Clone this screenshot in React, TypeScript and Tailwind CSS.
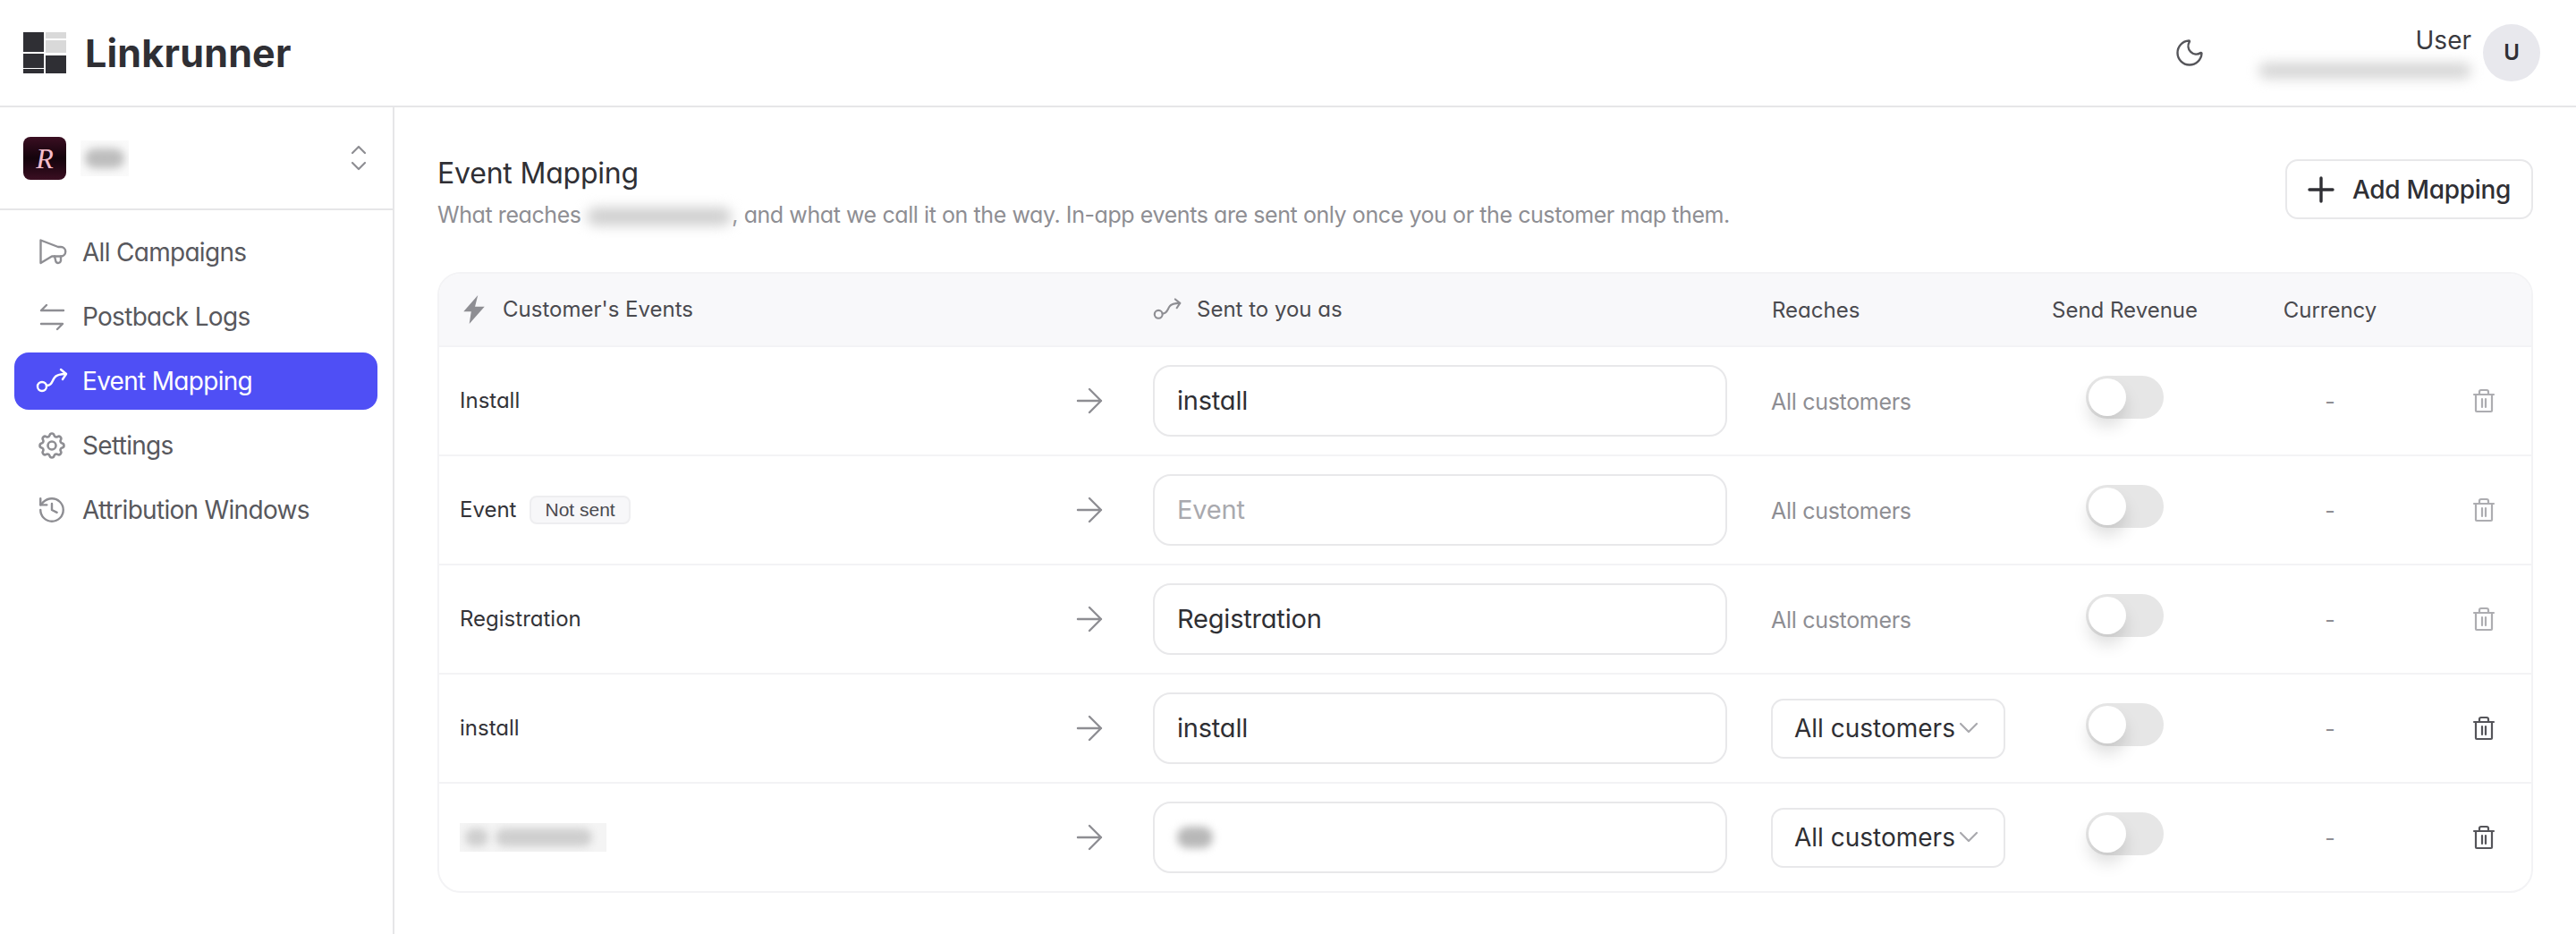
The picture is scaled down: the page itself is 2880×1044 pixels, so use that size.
import React from 'react';
import { History, Moon } from 'lucide-react';
import { TbSettings } from 'react-icons/tb';

const font = 'font-["Inter","Liberation_Sans",sans-serif] [font-feature-settings:"cv11"]';
const rowGrid = 'grid grid-cols-[798px_642px_363px_163px_296px_77px] items-center';

const LogoMark = () => (
  <svg width="48" height="46" viewBox="0 0 48 46" className="shrink-0">
    <rect x="0" y="0" width="23" height="22" fill="#2f2f34" />
    <rect x="0" y="24" width="23" height="16" fill="#2f2f34" />
    <rect x="0" y="41" width="23" height="5" fill="#2f2f34" />
    <rect x="25" y="0" width="23" height="7" fill="#d9d9d9" />
    <rect x="25" y="9" width="23" height="14" fill="#d9d9d9" />
    <rect x="25" y="26" width="23" height="20" fill="#2f2f34" />
  </svg>
);

const CampaignIcon = () => (
  <svg width="36" height="36" viewBox="0 0 36 36" fill="none" stroke="#8e8e93" strokeWidth="2.4" strokeLinejoin="round" strokeLinecap="round" className="shrink-0">
    <path d="M5.500 4.500L25 12h3a5 5 0 0 1 0 10.500H18L5.500 30Z" />
    <path d="M21 22.500l1.500 6a3 3 0 0 0 5.500-1v-5" />
  </svg>
);

const PostbackIcon = () => (
  <svg width="36" height="36" viewBox="0 0 36 36" fill="none" stroke="#8e8e93" strokeWidth="2.4" strokeLinecap="round" strokeLinejoin="round" className="shrink-0">
    <path d="M31 11H6l6-6" />
    <path d="M6 26h24l-6 6" />
  </svg>
);

const RouteIcon = ({ size, color }: { size: number; color: string }) => (
  <svg width={size} height={size} viewBox="0 0 36 36" fill="none" stroke={color} strokeWidth="2.4" strokeLinecap="round" strokeLinejoin="round" className="shrink-0">
    <circle cx="7" cy="24" r="5" />
    <path d="M12 23c6 0 6-5 9-9 2-3 5-4 13-4" />
    <path d="M28 5l6 5-4 6" />
  </svg>
);

const ArrowIcon = () => (
  <svg width="30" height="30" viewBox="0 0 30 30" fill="none" stroke="#8e8e93" strokeWidth="2.4" strokeLinecap="round" strokeLinejoin="round">
    <path d="M2 15h26M15 2l13 13-13 13" />
  </svg>
);

const TrashIcon = ({ color }: { color: string }) => (
  <svg width="26" height="28" viewBox="0 0 26 28" fill="none" stroke={color} strokeWidth="2.200" strokeLinecap="round" strokeLinejoin="round">
    <path d="M2 7h22" />
    <path d="M8 7V4a2 2 0 0 1 2-2h6a2 2 0 0 1 2 2v3" />
    <path d="M4 7v18a1 1 0 0 0 1 1h16a1 1 0 0 0 1-1V7" />
    <path d="M11 12v9M15 12v9" />
  </svg>
);

const Toggle = () => (
  <div className="mb-2 mx-auto w-[87px] h-[48px] rounded-full bg-[#e6e6e6] p-[3px]">
    <div className="w-[42px] h-[42px] rounded-full bg-white shadow-[0_12px_18px_rgba(0,0,0,0.13)]" />
  </div>
);

const Chevron = () => (
  <svg width="20" height="12" viewBox="0 0 20 12" fill="none" stroke="#8e8e93" strokeWidth="2.200" strokeLinecap="round" strokeLinejoin="round">
    <path d="M3 2l7 7 7-7" />
  </svg>
);

const navItems = [
  { label: 'All Campaigns', icon: <CampaignIcon /> },
  { label: 'Postback Logs', icon: <PostbackIcon /> },
  { label: 'Event Mapping', icon: <RouteIcon size={36} color="#ffffff" />, active: true },
  { label: 'Settings', icon: <TbSettings size={36} color="#8e8e93" strokeWidth={1.75} className="shrink-0" /> },
  { label: 'Attribution Windows', icon: <History size={34} color="#8e8e93" strokeWidth={1.7} className="shrink-0 mx-[1px]" /> },
];

const rows = [
  { name: 'Install', value: 'install', editable: false },
  { name: 'Event', value: '', editable: false, notSent: true },
  { name: 'Registration', value: 'Registration', editable: false },
  { name: 'install', value: 'install', editable: true },
  { name: '', value: '', editable: true, blurred: true },
];

export default function App() {
  return (
    <div className={`${font} h-screen bg-white flex flex-col overflow-hidden text-[#2f2f34]`}>
      <header className="h-[120px] shrink-0 border-b-2 border-[#e6e6e8] flex items-center justify-between pl-[26px] pr-[40px]">
        <div className="flex items-center gap-[21px]">
          <LogoMark />
          <span className="text-[43px] leading-none font-bold tracking-[0.2px]">Linkrunner</span>
        </div>
        <div className="flex items-center">
          <Moon size={36} color="#55555a" strokeWidth={1.6} className="mr-[52px]" />
          <div className="flex flex-col items-end mr-[13px] w-[245px] relative">
            <span className="text-[28px] leading-[36px] text-[#3a3a3f] -mt-[4px]">User</span>
            <div className="mt-[7px] w-[238px] h-[18px] rounded-full bg-[#d6d6d6] blur-[7px]" />
          </div>
          <div className="w-[64px] h-[64px] rounded-full bg-[#e8e8ed] flex items-center justify-center text-[24px] font-semibold">U</div>
        </div>
      </header>

      <div className="flex flex-1 min-h-0">
        <aside className="w-[441px] shrink-0 border-r-2 border-[#e6e6e8]">
          <div className="h-[115px] border-b-2 border-[#e6e6e8] flex items-center justify-between pl-[26px] pr-[28px]">
            <div className="flex items-center gap-[16px]">
              <div className="w-[48px] h-[48px] rounded-[8px] bg-gradient-to-b from-[#3b0f22] via-[#14040c] to-[#3b0f22] flex items-center justify-center text-[32px] italic text-[#f5bccb] font-['Liberation_Serif',serif]">R</div>
              <div className="w-[54px] h-[40px] bg-[#fafafa] overflow-hidden flex items-center justify-center">
                <div className="w-[44px] h-[22px] bg-[#bdbdbd] rounded-full blur-[5px]" />
              </div>
            </div>
            <div className="flex flex-col gap-[7px]">
              <div className="rotate-180"><Chevron /></div>
              <Chevron />
            </div>
          </div>
          <nav className="flex flex-col gap-[8px] pt-[15px] pl-[16px] pr-[17px]">
            {navItems.map(item => (
              <div
                key={item.label}
                className={`h-[64px] rounded-[16px] flex items-center gap-[16px] pl-[24px] text-[28px] tracking-[-0.7px] ${item.active ? 'bg-[#4f4ff5] text-white' : 'text-[#58585d]'}`}
              >
                {item.icon}
                <span>{item.label}</span>
              </div>
            ))}
          </nav>
        </aside>

        <main className="flex-1 min-w-0 pl-[48px] pr-[48px] pt-[54px]">
          <div className="flex items-start justify-between">
            <div>
              <h1 className="text-[32px] leading-[40px] font-normal tracking-[-0.2px] text-[#2f2f34]">Event Mapping</h1>
              <p className="mt-[8px] text-[25px] leading-[36px] tracking-[-0.42px] text-[#8e8e93]">
                What reaches <span className="inline-block align-middle w-[162px] h-[20px] bg-[#cfcfcf] rounded-full blur-[7px]" />, and what we call it on the way. In-app events are sent only once you or the customer map them.
              </p>
            </div>
            <button className="mt-[4px] h-[67px] w-[277px] rounded-[14px] border-2 border-[#e8e8ea] flex items-center justify-center gap-[20px] text-[28px] tracking-[-0.3px] font-medium text-[#2f2f34]">
              <svg width="30" height="30" viewBox="0 0 30 30" fill="none" stroke="#2f2f34" strokeWidth="3.400" strokeLinecap="round"><path d="M15 2v26M2 15h26" /></svg>
              Add Mapping
            </button>
          </div>

          <div className="mt-[46px] border-2 border-[#f3f3f5] rounded-[26px] overflow-hidden">
            <div className={`${rowGrid} h-[82px] bg-[#f8f8fa] border-b-2 border-[#f3f3f5] text-[24px] text-[#4a4a4f]`}>
              <div className="flex items-center gap-[20px] pl-[27px]">
                <svg width="24" height="32" viewBox="0 0 22 30" fill="#8e8e93" className="shrink-0"><path d="M15 0L0 17h8L6 30l16-18H12Z" /></svg>
                <span>Customer's Events</span>
              </div>
              <div className="flex items-center gap-[17px]">
                <RouteIcon size={32} color="#8e8e93" />
                <span>Sent to you as</span>
              </div>
              <div className="pl-[50px] mt-[2px]">Reaches</div>
              <div className="text-center whitespace-nowrap mt-[2px]">Send Revenue</div>
              <div className="text-center mt-[2px]">Currency</div>
              <div />
            </div>

            {rows.map((row, i) => (
              <div key={i} className={`${rowGrid} ${i < rows.length - 1 ? 'h-[122px] border-b-2 border-[#f3f3f5]' : 'h-[120px]'}`}>
                <div className="flex items-center justify-between pl-[23px] pr-[56px]">
                  {row.blurred ? (
                    <div className="w-[164px] h-[32px] bg-[#f4f4f4] overflow-hidden flex items-center gap-[8px] pl-[6px]">
                      <div className="w-[26px] h-[20px] bg-[#cfcfcf] rounded-full blur-[4px]" />
                      <div className="w-[108px] h-[20px] bg-[#cfcfcf] rounded-full blur-[4px]" />
                    </div>
                  ) : (
                    <div className="flex items-center gap-[15px] text-[24px] text-[#333338]">
                      <span>{row.name}</span>
                      {row.notSent && (
                        <span className="h-[32px] px-[15px] rounded-[8px] bg-[#f7f7f9] border-2 border-[#eeeef0] flex items-center text-[21px] text-[#4a4a4f] font-['Liberation_Sans',sans-serif]">Not sent</span>
                      )}
                    </div>
                  )}
                  <ArrowIcon />
                </div>
                <div className="h-[80px] rounded-[20px] border-2 border-[#e8e8ea] flex items-center px-[25px]">
                  {row.blurred ? (
                    <div className="w-[40px] h-[24px] rounded-full bg-[#b8b8b8] blur-[5px]" />
                  ) : (
                    <input
                      readOnly
                      defaultValue={row.value}
                      placeholder={row.name}
                      className="w-full bg-transparent outline-none text-[29px] tracking-[-0.2px] text-[#2f2f34] placeholder:text-[#a9a9ae]"
                    />
                  )}
                </div>
                <div className="pl-[49px]">
                  {row.editable ? (
                    <div className="w-[262px] h-[67px] rounded-[14px] border-2 border-[#e8e8ea] flex items-center pl-[24px] text-[28px] text-[#2f2f34]">
                      <span>All customers</span>
                      <svg width="22" height="14" viewBox="0 0 22 14" fill="none" stroke="#a9a9ae" strokeWidth="2.200" strokeLinecap="round" strokeLinejoin="round" className="ml-[4px] shrink-0"><path d="M2 2l9 9 9-9" /></svg>
                    </div>
                  ) : (
                    <span className="block mt-[4px] text-[25px] tracking-[-0.3px] text-[#8e8e93]">All customers</span>
                  )}
                </div>
                <Toggle />
                <div className="text-center mt-[4px] text-[25px] text-[#8e8e93]">-</div>
                <div className="pl-[11px]"><TrashIcon color={row.editable ? '#55555a' : '#adadb1'} /></div>
              </div>
            ))}
          </div>
        </main>
      </div>
    </div>
  );
}
